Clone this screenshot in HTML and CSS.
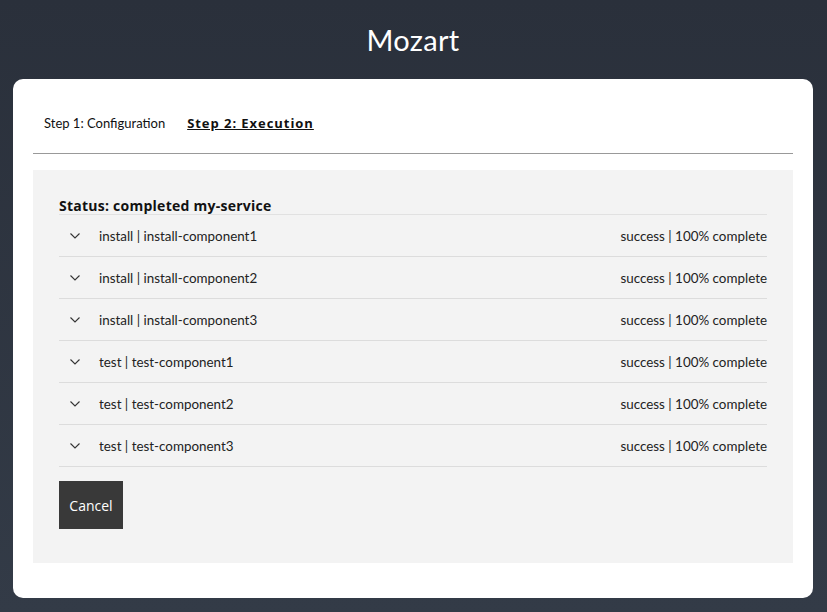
FILE: index.html
```html
<!DOCTYPE html>
<html>
<head>
<meta charset="utf-8">
<link rel="stylesheet" href="styles.css">
</head>
<body>
<header class="title">Mozart</header>
<main class="card">
  <nav class="tabs">
    <span class="tab">Step 1: Configuration</span>
    <span class="tab active">Step 2: Execution</span>
  </nav>
  <hr class="divider">
  <section class="panel">
    <h2 class="status">Status: completed my-service</h2>
    <ul class="rows">
      <li class="row"><span class="left"><svg class="chev" viewBox="0 0 10 6"><path d="M0.5 0.5 L5 5 L9.5 0.5"/></svg>install | install-component1</span><span class="right">success | 100% complete</span></li>
      <li class="row"><span class="left"><svg class="chev" viewBox="0 0 10 6"><path d="M0.5 0.5 L5 5 L9.5 0.5"/></svg>install | install-component2</span><span class="right">success | 100% complete</span></li>
      <li class="row"><span class="left"><svg class="chev" viewBox="0 0 10 6"><path d="M0.5 0.5 L5 5 L9.5 0.5"/></svg>install | install-component3</span><span class="right">success | 100% complete</span></li>
      <li class="row"><span class="left"><svg class="chev" viewBox="0 0 10 6"><path d="M0.5 0.5 L5 5 L9.5 0.5"/></svg>test | test-component1</span><span class="right">success | 100% complete</span></li>
      <li class="row"><span class="left"><svg class="chev" viewBox="0 0 10 6"><path d="M0.5 0.5 L5 5 L9.5 0.5"/></svg>test | test-component2</span><span class="right">success | 100% complete</span></li>
      <li class="row"><span class="left"><svg class="chev" viewBox="0 0 10 6"><path d="M0.5 0.5 L5 5 L9.5 0.5"/></svg>test | test-component3</span><span class="right">success | 100% complete</span></li>
    </ul>
    <button class="cancel">Cancel</button>
  </section>
</main>
</body>
</html>
```
FILE: styles.css
```css
html, body {
  margin: 0;
  height: 100%;
}
body {
  background: linear-gradient(180deg, #2a303b 0%, #333b47 100%);
  font-family: "Lato", "Open Sans", sans-serif;
  color: #111;
  padding: 0 14px 14px 13px;
  box-sizing: border-box;
  display: flex;
  flex-direction: column;
}
.title {
  color: #fff;
  font-size: 29px;
  text-align: center;
  height: 79px;
  line-height: 79px;
  letter-spacing: 0.3px;
}
.card {
  background: #fff;
  border-radius: 10px;
  padding: 0 20px 35px 20px;
}
.tabs {
  display: flex;
  gap: 22px;
  padding: 36px 0 0 11px;
  height: 38px;
  font-size: 13px;
}
.tab {
  line-height: 17px;
}
.tab.active {
  font-family: "Open Sans", sans-serif;
  font-weight: 700;
  font-size: 13px;
  letter-spacing: 0.95px;
  text-decoration: underline;
}
.divider {
  margin: 0;
  border: none;
  border-top: 1px solid #999;
  height: 0;
}
.panel {
  margin-top: 16px;
  background: #f3f3f3;
  padding: 27px 26px 34px 26px;
}
.status {
  margin: 0;
  font-family: "Open Sans", sans-serif;
  font-size: 14px;
  font-weight: 700;
  letter-spacing: 0.25px;
  line-height: 17px;
}
.rows {
  list-style: none;
  margin: 0;
  padding: 0;
  border-top: 1px solid #e1e1e1;
}
.row {
  display: flex;
  justify-content: space-between;
  align-items: center;
  height: 41px;
  border-bottom: 1px solid #dcdcdc;
  font-size: 13.4px;
  color: #222;
}
.left {
  display: flex;
  align-items: center;
}
.chev {
  width: 10px;
  height: 6px;
  margin: 0 19px 0 11px;
  fill: none;
  stroke: #333;
  stroke-width: 1.1;
}
.cancel {
  margin-top: 14px;
  background: #393939;
  color: #fff;
  border: none;
  width: 64px;
  height: 48px;
  font-family: "Open Sans", sans-serif;
  font-size: 14px;
  padding: 0;
}
```
